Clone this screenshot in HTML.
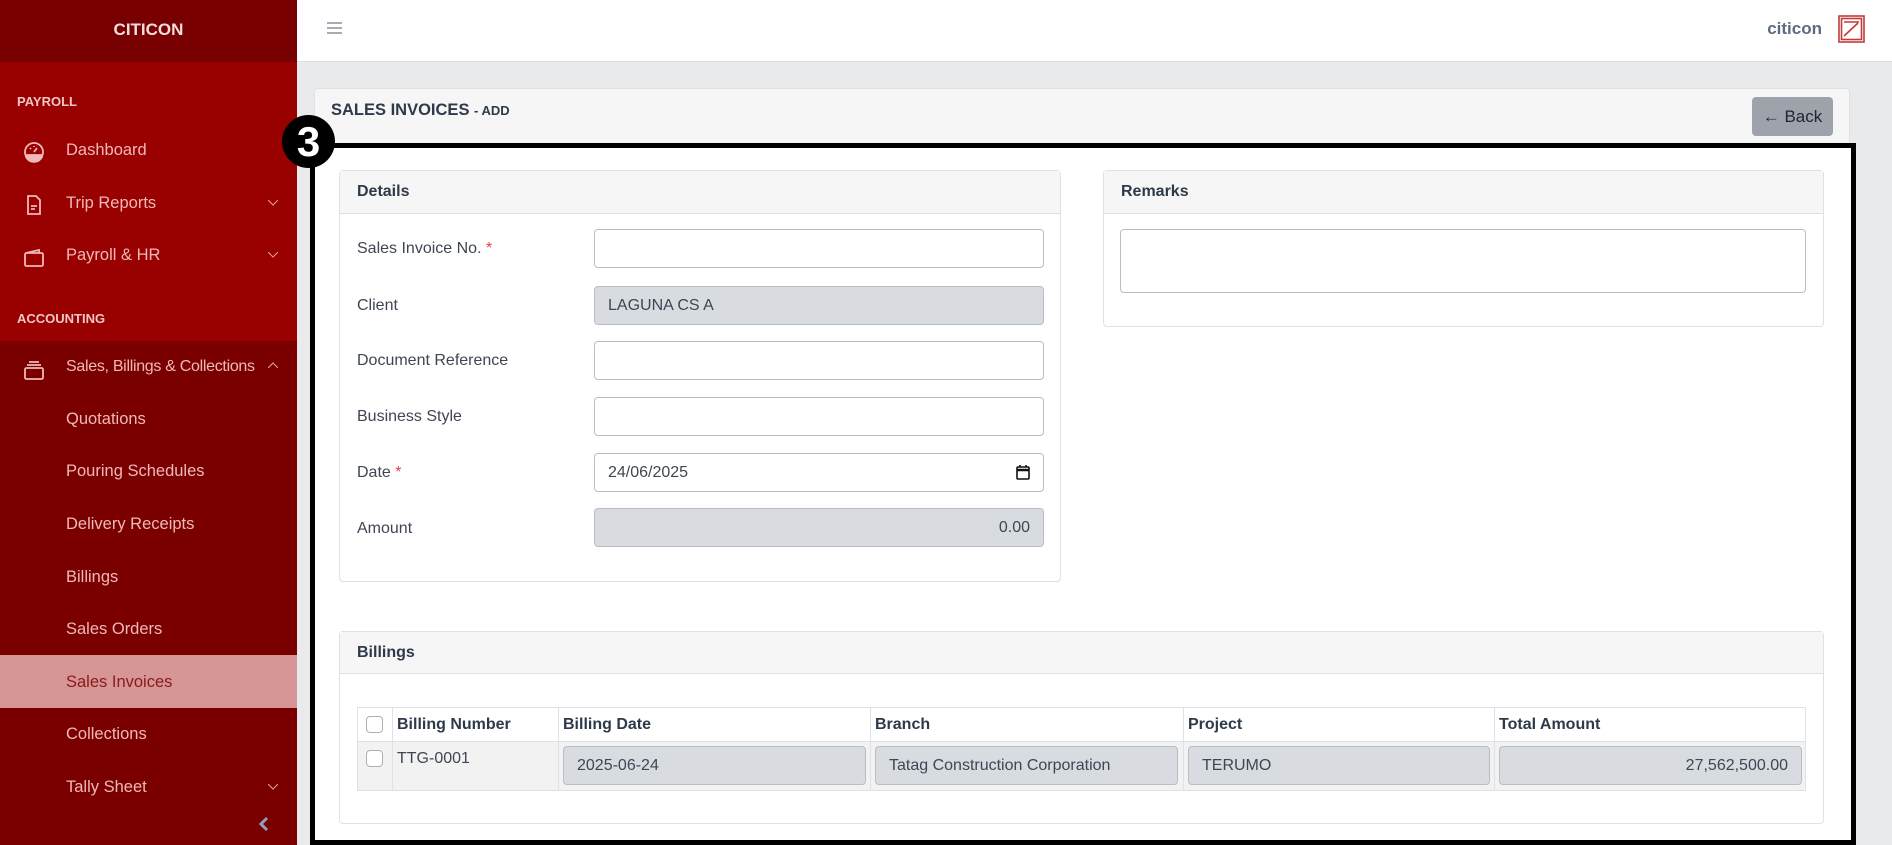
<!DOCTYPE html>
<html><head><meta charset="utf-8"><style>
*{box-sizing:border-box;margin:0;padding:0}
html,body{width:1892px;height:845px;overflow:hidden}
body{background:#e9eaec;font-family:"Liberation Sans",sans-serif;position:relative;color:#333}
.a{position:absolute}
#sb{left:0;top:0;width:297px;height:845px;background:#7a0000}
.sbt{left:0;top:0;width:297px;height:62px;background:#780000;color:#f2dede;font-weight:bold;font-size:17px;text-align:center;line-height:60px}
.pay{left:0;top:62px;width:297px;height:279px;background:#990000}
.sh{color:#f0c6c6;font-weight:bold;font-size:13px;left:17px}
.it{color:#f0b8b8;font-size:16.5px;left:66px;line-height:20px;white-space:nowrap}
.ic{left:22px;width:24px;height:24px}
.chev{left:268px;width:10px;height:6px}
.act{left:0;top:655px;width:297px;height:53px;background:#d79696}
#top{left:297px;top:0;width:1595px;height:62px;background:#fff;border-bottom:1px solid #dcdde0}
.card{background:#fff;border:1px solid #dfe1e4;border-radius:4px}
.ch{background:#f6f6f6;border-bottom:1px solid #dfe1e4;font-weight:bold;font-size:16px;color:#2e3a4a;padding-left:17px}
.lbl{left:357px;font-size:16px;color:#3f4653}
.inp{left:594px;width:450px;height:39px;border:1px solid #b9bec6;border-radius:4px;background:#fff;font-size:16px;color:#3f4653;padding:0 13px;line-height:37px;white-space:nowrap;overflow:hidden}
.dis{background:#d8dbe0}
.req{color:#e0424a}
.th{font-weight:bold;font-size:16px;color:#2e3a4a}
</style></head><body>
<div id="sb" class="a">
<div class="a sbt">CITICON</div>
<div class="a pay"></div>
<div class="a sh" style="top:94px">PAYROLL</div>
<svg class="a ic" style="top:140px" viewBox="0 0 24 24" fill="none" stroke="#f0b8b8" stroke-width="1.8"><circle cx="12" cy="12" r="9"/><path d="M4 15h16v2a9 9 0 0 1-16 0z" fill="#f0b8b8"/><path d="M12 12l3-4M8 8l1 1M12 6v1"/></svg>
<div class="a it" style="top:140px">Dashboard</div>
<svg class="a ic" style="top:193px" viewBox="0 0 24 24" fill="none" stroke="#f0b8b8" stroke-width="1.8"><path d="M6 3h8l4 4v14H6z"/><path d="M9 13h6M9 16h4"/></svg>
<div class="a it" style="top:193px">Trip Reports</div>
<svg class="a chev" style="top:200px" viewBox="0 0 10 6" fill="none" stroke="#e8a0a0"><path d="M0 0l5 5 5-5"/></svg>
<svg class="a ic" style="top:245px" viewBox="0 0 24 24" fill="none" stroke="#f0b8b8" stroke-width="1.8"><rect x="3" y="8" width="18" height="13" rx="1.5"/><path d="M4 8l13-3v3"/></svg>
<div class="a it" style="top:245px">Payroll &amp; HR</div>
<svg class="a chev" style="top:252px" viewBox="0 0 10 6" fill="none" stroke="#e8a0a0"><path d="M0 0l5 5 5-5"/></svg>
<div class="a sh" style="top:311px">ACCOUNTING</div>
<svg class="a ic" style="top:358px" viewBox="0 0 24 24" fill="none" stroke="#f0b8b8" stroke-width="1.8"><rect x="3" y="10" width="18" height="11" rx="1.5"/><path d="M5 7h14M7 4h10"/></svg>
<div class="a it" style="top:357px;font-size:16px;letter-spacing:-0.3px">Sales, Billings &amp; Collections</div>
<svg class="a chev" style="top:362px" viewBox="0 0 10 6" fill="none" stroke="#e8a0a0"><path d="M0 6l5-5 5 5"/></svg>
<div class="a act"></div>
<div class="a it" style="top:409px">Quotations</div>
<div class="a it" style="top:461px">Pouring Schedules</div>
<div class="a it" style="top:514px">Delivery Receipts</div>
<div class="a it" style="top:567px">Billings</div>
<div class="a it" style="top:619px">Sales Orders</div>
<div class="a it" style="top:672px;color:#8a1a1a">Sales Invoices</div>
<div class="a it" style="top:724px">Collections</div>
<div class="a it" style="top:777px">Tally Sheet</div>
<svg class="a chev" style="top:784px" viewBox="0 0 10 6" fill="none" stroke="#e8a0a0"><path d="M0 0l5 5 5-5"/></svg>
<svg class="a" style="left:259px;top:816px;width:10px;height:16px" viewBox="0 0 10 16" fill="none" stroke="#8fa0b8" stroke-width="3"><path d="M8 2L2 8l6 6"/></svg>
</div>
<div id="top" class="a">
<svg class="a" style="left:30px;top:22px;width:15px;height:12px" viewBox="0 0 15 12" stroke="#8a919c" stroke-width="1.5"><path d="M0 1h15M0 6h15M0 11h15"/></svg>
<div class="a" style="right:70px;top:19px;font-weight:bold;font-size:17px;color:#5d6b80">citicon</div>
<svg class="a" style="left:1541px;top:15px;width:27px;height:28px" viewBox="0 0 27 28" fill="none" stroke="#c23a3a" stroke-width="1.6"><rect x="1" y="1" width="25" height="26"/><rect x="3.5" y="3.5" width="20" height="21"/><path d="M6 21l14-13M6 7h15"/></svg>
</div>
<div class="a card" style="left:314px;top:88px;width:1536px;height:60px;background:#f6f6f6"></div>
<div class="a" style="left:331px;top:101px;font-weight:bold;font-size:16.5px;color:#2e3a4a">SALES INVOICES <span style="font-size:13px">- ADD</span></div>
<div class="a" style="left:1752px;top:97px;width:81px;height:39px;background:#9ea3ab;border-radius:4px;color:#1d2433;font-size:17px;line-height:39px;text-align:center">&#8592; Back</div>
<div class="a" style="left:310px;top:143px;width:1546px;height:702px;background:#fff;border:5px solid #000"></div>
<div class="a" style="left:282px;top:115px;width:53px;height:53px;border-radius:50%;background:#000;color:#fff;font-weight:bold;font-size:42px;text-align:center;line-height:53px">3</div>
<div class="a card" style="left:339px;top:170px;width:722px;height:412px">
<div class="ch" style="height:43px;line-height:42px">Details</div></div>
<div class="a lbl" style="top:240px">Sales Invoice No. <span class="req">*</span></div>
<div class="a inp" style="top:229px"></div>
<div class="a lbl" style="top:297px">Client</div>
<div class="a inp dis" style="top:286px">LAGUNA CS A</div>
<div class="a lbl" style="top:352px">Document Reference</div>
<div class="a inp" style="top:341px"></div>
<div class="a lbl" style="top:408px">Business Style</div>
<div class="a inp" style="top:397px"></div>
<div class="a lbl" style="top:464px">Date <span class="req">*</span></div>
<div class="a inp" style="top:453px">24/06/2025<svg class="a" style="right:13px;top:11px;width:14px;height:15px" viewBox="0 0 14 15" fill="none" stroke="#111" stroke-width="1.6"><rect x="1" y="2" width="12" height="12" rx="1"/><path d="M1 5h12" stroke-width="2.5"/><path d="M4 0v2M10 0v2"/></svg></div>
<div class="a lbl" style="top:520px">Amount</div>
<div class="a inp dis" style="top:508px;text-align:right">0.00</div>
<div class="a card" style="left:1103px;top:170px;width:721px;height:157px">
<div class="ch" style="height:43px;line-height:42px">Remarks</div></div>
<div class="a" style="left:1120px;top:229px;width:686px;height:64px;border:1px solid #b9bec6;border-radius:4px"></div>
<div class="a card" style="left:339px;top:631px;width:1485px;height:193px">
<div class="ch" style="height:42px;line-height:41px">Billings</div></div>
<div class="a" style="left:357px;top:707px;width:1449px;height:84px;border:1px solid #dee2e6"></div>
<div class="a" style="left:358px;top:741px;width:1447px;height:49px;background:#f2f2f2;border-top:1px solid #dee2e6"></div>
<div class="a" style="left:392px;top:707px;width:1px;height:84px;background:#dee2e6"></div>
<div class="a" style="left:558px;top:707px;width:1px;height:84px;background:#dee2e6"></div>
<div class="a" style="left:870px;top:707px;width:1px;height:84px;background:#dee2e6"></div>
<div class="a" style="left:1183px;top:707px;width:1px;height:84px;background:#dee2e6"></div>
<div class="a" style="left:1494px;top:707px;width:1px;height:84px;background:#dee2e6"></div>
<div class="a" style="left:366px;top:716px;width:17px;height:17px;border:1px solid #aab0b8;border-radius:4px;background:#fff"></div>
<div class="a" style="left:366px;top:750px;width:17px;height:17px;border:1px solid #aab0b8;border-radius:4px;background:#fff"></div>
<div class="a th" style="left:397px;top:716px">Billing Number</div>
<div class="a th" style="left:563px;top:716px">Billing Date</div>
<div class="a th" style="left:875px;top:716px">Branch</div>
<div class="a th" style="left:1188px;top:716px">Project</div>
<div class="a th" style="left:1499px;top:716px">Total Amount</div>
<div class="a" style="left:397px;top:750px;font-size:16px;color:#3f4653">TTG-0001</div>
<div class="a inp dis" style="left:563px;top:746px;width:303px">2025-06-24</div>
<div class="a inp dis" style="left:875px;top:746px;width:303px">Tatag Construction Corporation</div>
<div class="a inp dis" style="left:1188px;top:746px;width:302px">TERUMO</div>
<div class="a inp dis" style="left:1499px;top:746px;width:303px;text-align:right">27,562,500.00</div>
</body></html>
